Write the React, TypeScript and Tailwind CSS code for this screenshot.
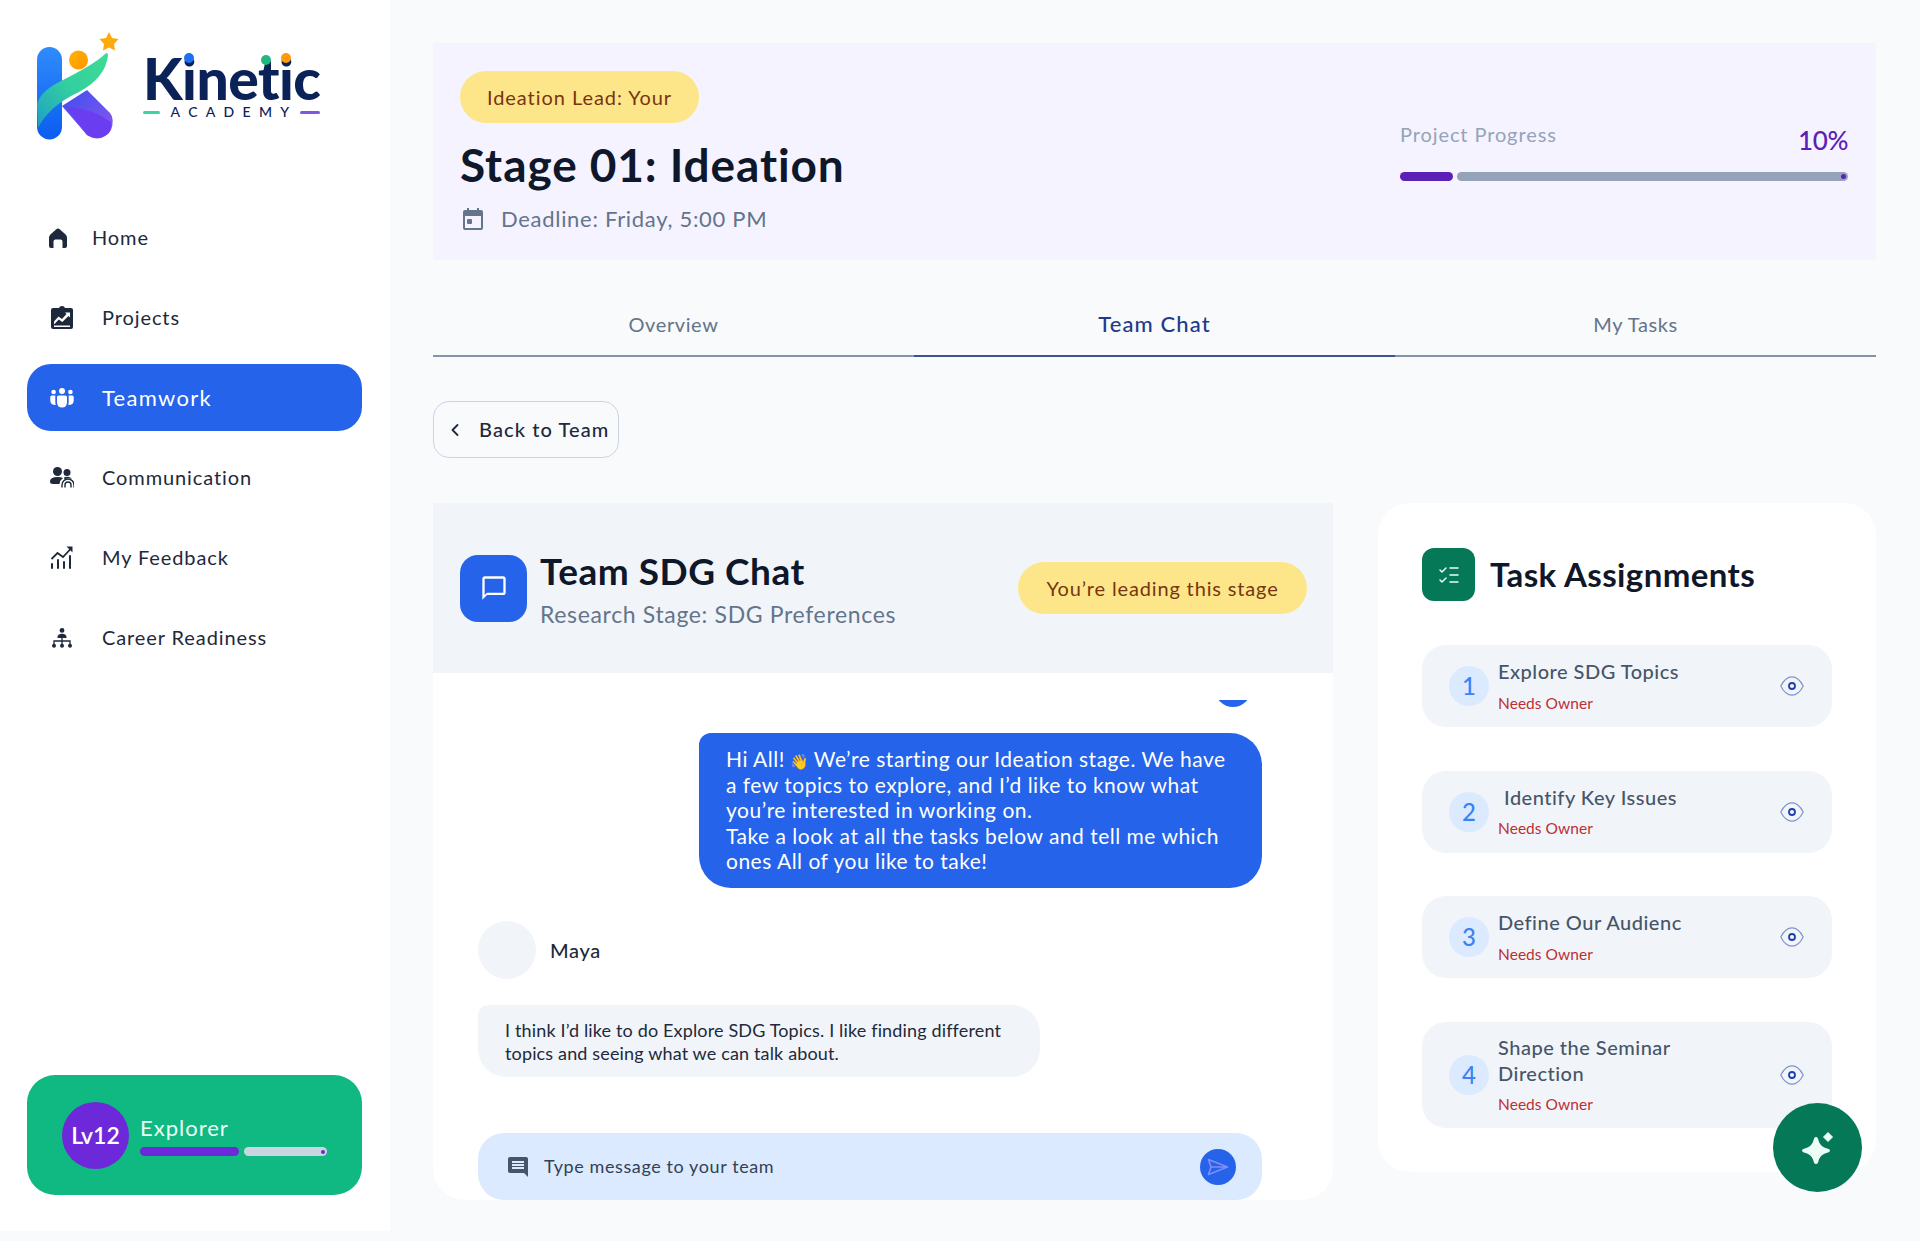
import { ChevronLeft, ListChecks } from "lucide-react";

type Task = {
  id: number;
  title: string[];
  indent?: boolean;
};

const tasks: Task[] = [
  { id: 1, title: ["Explore SDG Topics"] },
  { id: 2, title: ["Identify Key Issues"], indent: true },
  { id: 3, title: ["Define Our Audienc"] },
  { id: 4, title: ["Shape the Seminar", "Direction"] },
];

function KMark() {
  return (
    <svg width="90" height="112" viewBox="0 0 90 112" fill="none">
      <defs>
        <linearGradient id="kbar" x1="0" y1="0" x2="0" y2="1">
          <stop offset="0" stopColor="#2f8cfb" />
          <stop offset="1" stopColor="#0b5cf0" />
        </linearGradient>
        <linearGradient id="kleg" x1="0" y1="0" x2="1" y2="1">
          <stop offset="0" stopColor="#3b50ef" />
          <stop offset="1" stopColor="#8d56ee" />
        </linearGradient>
        <linearGradient id="kswoosh" x1="0" y1="1" x2="1" y2="0">
          <stop offset="0" stopColor="#1f9ec8" />
          <stop offset="0.5" stopColor="#33cf9f" />
          <stop offset="1" stopColor="#3fdc94" />
        </linearGradient>
        <linearGradient id="khead" x1="0" y1="0" x2="1" y2="1">
          <stop offset="0" stopColor="#ffb300" />
          <stop offset="1" stopColor="#ff9500" />
        </linearGradient>
      </defs>
      <path d="M25 74 L50 58 L73 81 Q78 87 74 98 Q64 112 50 103 L25 74 Z" fill="url(#kleg)" />
      <path d="M28 74 Q56 77 74 90 Q75 96 72 101 Q62 110 50 103 Z" fill="#6b3df0" />
      <rect x="0" y="15" width="25" height="92.5" rx="12.5" fill="url(#kbar)" />
      <path d="M0 72 Q3 60 22 50 Q58 32 68 22 Q71 19 71 24 Q68 46 42 60 Q12 74 1 96 Z" fill="url(#kswoosh)" />
      <circle cx="41.5" cy="28" r="9.5" fill="url(#khead)" />
      <path d="M72 0 L75 6 L81.5 7 L77 12 L78 18.5 L72 15.5 L66 18.5 L67 12 L62.5 7 L69 6 Z" fill="#ffa90a" />
    </svg>
  );
}

function Logo() {
  return (
    <div className="flex pl-[37px] pt-[32px]">
      <KMark />
      <div className="relative ml-[16px] mt-[21px] h-[74px] w-[177px]">
        <div className="text-[57px] leading-[50px] font-black tracking-[-0.5px] text-[#0a2257]">Kinetic</div>
        <span className="absolute left-[41px] top-[0px] h-[10px] w-[10px] rounded-full bg-[#1f6ff2]" />
        <span className="absolute left-[118px] top-[2px] h-[10px] w-[10px] rounded-full bg-[#22b77f]" />
        <span className="absolute left-[138px] top-[0px] h-[10px] w-[10px] rounded-full bg-[#ff9a0d]" />
        <div className="flex items-center justify-between">
          <span className="h-[3px] w-[17px] rounded-full bg-[#3fd49b]" />
          <span className="-mr-[8px] text-[14px] leading-[18px] font-medium tracking-[8.3px] text-[#0a2257]">ACADEMY</span>
          <span className="h-[3px] w-[20px] rounded-full bg-[#7b57e8]" />
        </div>
      </div>
    </div>
  );
}

function HomeIcon() {
  return (
    <svg width="18" height="20" viewBox="0 0 18 20" fill="currentColor">
      <path d="M9 0.5 Q10 0.5 11 1.5 L16.6 6.4 Q18 7.6 18 9.5 V18 Q18 20 16 20 H13.5 V13.5 Q13.5 11.5 11.5 11.5 H6.5 Q4.5 11.5 4.5 13.5 V20 H2 Q0 20 0 18 V9.5 Q0 7.6 1.4 6.4 L7 1.5 Q8 0.5 9 0.5 Z" />
    </svg>
  );
}

function ProjectsIcon() {
  return (
    <svg width="22" height="23" viewBox="0 0 22 23" fill="currentColor">
      <path fillRule="evenodd" d="M8 2 Q8.5 0 11 0 Q13.5 0 14 2 H20 Q22 2 22 4 V21 Q22 23 20 23 H2 Q0 23 0 21 V4 Q0 2 2 2 Z M3 15.5 L7.5 10.5 L11 13 L15.5 8 L14 6.5 H19 V11.5 L17.5 10 L11.3 16 L7.8 13.5 L3 18.5 Z M3 19.5 H19 V21 H3 Z" />
    </svg>
  );
}

function TeamIcon() {
  return (
    <svg width="24" height="20" viewBox="0 0 24 20" fill="currentColor">
      <circle cx="12" cy="3" r="3" />
      <circle cx="3.6" cy="4" r="2.3" />
      <circle cx="20.4" cy="4" r="2.3" />
      <path d="M7 9 Q7 7.5 8.5 7.5 H15.5 Q17 7.5 17 9 V14 Q17 19.5 12 19.5 Q7 19.5 7 14 Z" />
      <path d="M0.3 9 Q0.3 7.5 1.8 7.5 H5.4 Q5.3 8 5.3 9 V14 Q5.3 15.5 5.8 17 Q0.3 17 0.3 12.5 Z" />
      <path d="M23.7 9 Q23.7 7.5 22.2 7.5 H18.6 Q18.7 8 18.7 9 V14 Q18.7 15.5 18.2 17 Q23.7 17 23.7 12.5 Z" />
    </svg>
  );
}

function CommunicationIcon() {
  return (
    <svg width="24" height="21" viewBox="0 0 24 21" fill="currentColor">
      <circle cx="7.5" cy="4.5" r="4.5" />
      <circle cx="17" cy="5.5" r="3.5" />
      <path d="M0 14.5 Q0 10 7.5 10 Q11 10 13 11 Q10 13 9.5 17 H3 Q0 17 0 14.5 Z" />
      <path d="M14 10.5 Q16 9.5 19 10 Q21 10.5 22 12 Q18 10.5 14.5 12.5 Z" />
      <path d="M12 20.5 V18 A6 6 0 0 1 24 18 V20.5" fill="none" stroke="currentColor" strokeWidth="1.4" />
      <path d="M15 20.5 V18 A3 3 0 0 1 21 18 V20.5" fill="none" stroke="currentColor" strokeWidth="1.4" />
    </svg>
  );
}

function FeedbackIcon() {
  return (
    <svg width="22" height="23" viewBox="0 0 22 23" fill="currentColor">
      <rect x="0" y="17" width="2" height="6" rx="1" />
      <rect x="6" y="13" width="2" height="10" rx="1" />
      <rect x="12" y="15" width="2" height="8" rx="1" />
      <rect x="18" y="9" width="2" height="14" rx="1" />
      <path d="M0.5 13 L6.5 7 L12 11 L20 2.5" fill="none" stroke="currentColor" strokeWidth="1.8" />
      <path d="M15.5 0.5 H21.5 V6.5 Z" />
    </svg>
  );
}

function CareerIcon() {
  return (
    <svg width="20" height="20" viewBox="0 0 20 20" fill="currentColor">
      <circle cx="10" cy="2.4" r="2.4" />
      <path d="M5.5 9.5 Q5.5 5.8 10 5.8 Q14.5 5.8 14.5 9.5 V10 H5.5 Z" />
      <path d="M2 17 V13 H18 V17" fill="none" stroke="currentColor" strokeWidth="1.3" />
      <path d="M10 10 V17" fill="none" stroke="currentColor" strokeWidth="1.3" />
      <circle cx="2" cy="17.7" r="2" />
      <circle cx="10" cy="17.7" r="2" />
      <circle cx="18" cy="17.7" r="2" />
    </svg>
  );
}

function SparkleIcon() {
  return (
    <svg width="32" height="34" viewBox="0 0 32 34" fill="#ecfdf5">
      <path d="M14 6 C15.6 6 16 7.4 16.5 9.2 C17.6 13.4 20 15.8 24.6 17.2 C26.6 17.8 28 18.4 28 19.6 C28 20.8 26.6 21.4 24.6 22 C20 23.4 17.6 25.8 16.5 30 C16 31.8 15.6 33 14 33 C12.4 33 12 31.8 11.5 30 C10.4 25.8 8 23.4 3.4 22 C1.4 21.4 0 20.8 0 19.6 C0 18.4 1.4 17.8 3.4 17.2 C8 15.8 10.4 13.4 11.5 9.2 C12 7.4 12.4 6 14 6 Z" />
      <path d="M26 1.5 L30.5 6 L26 10.5 L21.5 6 Z" strokeLinejoin="round" stroke="#ecfdf5" strokeWidth="1" />
    </svg>
  );
}

function SendIcon() {
  return (
    <svg width="22" height="18" viewBox="0 0 22 18" fill="none">
      <path d="M1.5 1.5 L20.5 9 L1.5 16.5 L4 9 Z M4 9 H20.5" stroke="#818cf8" strokeWidth="1.7" strokeLinejoin="round" />
    </svg>
  );
}

function EyeIcon() {
  return (
    <svg width="24" height="20" viewBox="0 0 24 20" fill="none" className="shrink-0">
      <path d="M0.8 10 C4 3.5 8.5 0.8 12 0.8 C15.5 0.8 20 3.5 23.2 10 C20 16.5 15.5 19.2 12 19.2 C8.5 19.2 4 16.5 0.8 10 Z" stroke="#7f93cb" strokeWidth="1.2" />
      <circle cx="12" cy="10" r="3" stroke="#1e40af" strokeWidth="1.8" />
    </svg>
  );
}

type NavItemProps = {
  icon: React.ReactNode;
  label: string;
  active?: boolean;
  home?: boolean;
};

function NavItem({ icon, label, active, home }: NavItemProps) {
  return (
    <div
      className={`flex h-[67px] items-center rounded-[24px] pl-[23px] ${
        active ? "bg-[#2563eb] text-[22px] tracking-[1.3px] text-white" : "text-[20px] tracking-[0.9px] text-[#1e293b]"
      }`}
    >
      <span className={`flex w-[24px] justify-center ${home ? "-ml-[4px]" : ""}`}>{icon}</span>
      <span className={`${active ? "" : "pb-[2px]"} ${home ? "ml-[22px]" : "ml-[28px]"}`}>{label}</span>
    </div>
  );
}

function Sidebar() {
  return (
    <aside className="flex h-[1231px] w-[390px] shrink-0 flex-col bg-white">
      <div className="h-[204px]">
        <Logo />
      </div>
      <nav className="flex flex-col gap-[13px] pl-[27px] pr-[28px]">
        <NavItem icon={<HomeIcon />} label="Home" home />
        <NavItem icon={<ProjectsIcon />} label="Projects" />
        <NavItem icon={<TeamIcon />} label="Teamwork" active />
        <NavItem icon={<CommunicationIcon />} label="Communication" />
        <NavItem icon={<FeedbackIcon />} label="My Feedback" />
        <NavItem icon={<CareerIcon />} label="Career Readiness" />
      </nav>
      <div className="mt-auto pl-[27px] pr-[28px] pb-[36px]">
        <div className="flex h-[120px] items-center rounded-[28px] bg-[#10b981] px-[35px]">
          <div className="flex h-[67px] w-[67px] shrink-0 items-center justify-center rounded-full bg-[#6d28d9] pt-[1px] text-[23px] font-semibold text-white">
            Lv12
          </div>
          <div className="ml-[11px] flex-1">
            <div className="text-[22px] leading-[28px] tracking-[1px] text-[#ecfdf5]">Explorer</div>
            <div className="mt-[5px] flex gap-[5px]">
              <div className="h-[9px] w-[99px] rounded-full bg-[#6d28d9]" />
              <div className="flex h-[9px] w-[83px] items-center justify-end rounded-full bg-[#cbd5e1] pr-[2px]">
                <span className="h-[4px] w-[4px] rounded-full bg-[#6d28d9]" />
              </div>
            </div>
          </div>
        </div>
      </div>
    </aside>
  );
}

function StageHeader() {
  return (
    <section className="flex h-[217px] justify-between bg-[#f5f3ff] pl-[27px] pr-[28px] pt-[28px]">
      <div>
        <div className="inline-flex h-[52px] w-[239px] items-center justify-center rounded-full bg-[#fde68a] text-[20px] tracking-[0.95px] text-[#78350f]">
          Ideation Lead: Your
        </div>
        <h1 className="mt-[14px] text-[46px] leading-[56px] font-bold tracking-[0.9px] text-[#0f172a]">Stage 01: Ideation</h1>
        <div className="mt-[11px] flex items-center text-[22px] leading-[30px] tracking-[0.7px] text-[#64748b]">
          <svg width="20" height="22" viewBox="0 0 20 22" fill="currentColor" className="ml-[3px]">
            <path fillRule="evenodd" d="M4 0 H6 V2 H14 V0 H16 V2 H18 Q20 2 20 4 V20 Q20 22 18 22 H2 Q0 22 0 20 V4 Q0 2 2 2 H4 Z M2 8 V20 H18 V8 Z" />
            <rect x="4" y="11" width="5" height="5" rx="1" />
          </svg>
          <span className="ml-[18px]">Deadline: Friday, 5:00 PM</span>
        </div>
      </div>
      <div className="w-[448px] pt-[49px]">
        <div className="flex items-end justify-between">
          <span className="mb-[10px] text-[20px] leading-[28px] tracking-[0.9px] text-[#94a3b8]">Project Progress</span>
          <span className="mb-[2px] text-[26px] leading-[32px] font-medium tracking-[-0.4px] text-[#5b21b6]">10%</span>
        </div>
        <div className="mt-[14px] flex gap-[4px]">
          <div className="h-[9px] w-[53px] rounded-full bg-[#5b21b6]" />
          <div className="flex h-[9px] flex-1 items-center justify-end rounded-full bg-[#94a3b8] pr-[2px]">
            <span className="h-[5px] w-[5px] rounded-full bg-[#5b21b6]" />
          </div>
        </div>
      </div>
    </section>
  );
}

function Tabs() {
  return (
    <div className="grid h-[97px] grid-cols-3 text-[20px] tracking-[0.6px]">
      <div className="flex items-center justify-center border-b-2 border-[#8593aa] pt-[32px] text-[#64748b]">Overview</div>
      <div className="flex items-center justify-center border-b-2 border-[#3a5590] pt-[32px] text-[22px] font-medium tracking-[1.1px] text-[#1e3a8a]">Team Chat</div>
      <div className="flex items-center justify-center border-b-2 border-[#8593aa] pt-[32px] text-[#64748b]">My Tasks</div>
    </div>
  );
}

function ChatPanel() {
  return (
    <section className="flex h-[697px] w-[900px] shrink-0 flex-col overflow-hidden rounded-b-[32px] bg-white">
      <div className="flex h-[170px] shrink-0 items-center justify-between bg-[#f1f5f9] pl-[27px] pr-[26px]">
        <div className="flex items-center">
          <div className="flex h-[67px] w-[67px] items-center justify-center rounded-[18px] bg-[#2563eb] text-white">
            <svg width="28" height="28" viewBox="0 0 24 24" fill="currentColor">
              <path d="M20 2H4c-1.1 0-2 .9-2 2v18l4-4h14c1.1 0 2-.9 2-2V4c0-1.1-.9-2-2-2zm0 14H6l-2 2V4h16v12z" />
            </svg>
          </div>
          <div className="ml-[13px] pt-[3px]">
            <h2 className="text-[37px] leading-[46px] font-bold tracking-[0.5px] text-[#0f172a]">Team SDG Chat</h2>
            <p className="mt-[2px] text-[23px] leading-[36px] tracking-[0.65px] text-[#64748b]">Research Stage: SDG Preferences</p>
          </div>
        </div>
        <div className="flex h-[52px] w-[289px] items-center justify-center rounded-full bg-[#fde68a] text-[20px] tracking-[0.85px] text-[#78350f]">
          You’re leading this stage
        </div>
      </div>
      <div className="flex flex-1 flex-col pl-[45px] pr-[71px] pt-[27px]">
        <div className="ml-auto mr-[11px] h-[7px] w-[36px] overflow-hidden">
          <div className="-mt-[29px] h-[36px] w-[36px] rounded-full bg-[#2563eb]" />
        </div>
        <div className="mt-[26px] ml-auto h-[155px] w-[563px] whitespace-nowrap rounded-[32px] rounded-tl-[12px] bg-[#2563eb] pl-[27px] pt-[13px] text-[21px] leading-[25.6px] tracking-[0.5px] text-white">
          Hi All!<span className="mx-[5px] text-[15px] leading-none tracking-normal">👋</span>We’re starting our Ideation stage. We have
          <br />
          a few topics to explore, and I’d like to know what
          <br />
          you’re interested in working on.
          <br />
          Take a look at all the tasks below and tell me which
          <br />
          ones All of you like to take!
        </div>
        <div className="mt-[33px] flex items-center">
          <div className="h-[58px] w-[58px] rounded-full bg-[#f1f5f9]" />
          <span className="ml-[14px] text-[20px] font-medium tracking-[0.7px] text-[#1e293b]">Maya</span>
        </div>
        <div className="mt-[26px] h-[72px] w-[562px] rounded-[28px] rounded-tl-[10px] bg-[#f1f5f9] pl-[27px] pr-[20px] pt-[14px] text-[18px] leading-[22.5px] tracking-[0.15px] text-[#1e293b]">
          I think I’d like to do Explore SDG Topics. I like finding different topics and seeing what we can talk about.
        </div>
        <div className="mt-[56px] flex h-[67px] items-center rounded-[26px] bg-[#dbeafe] pl-[28px] pr-[26px]">
          <svg width="24" height="24" viewBox="0 0 24 24" fill="#475569">
            <path d="M20 2H4c-1.1 0-2 .9-2 2v12c0 1.1.9 2 2 2h14l4 4V4c0-1.1-.9-2-2-2zm-2 12H6v-2h12v2zm0-3H6V9h12v2zm0-3H6V6h12v2z" />
          </svg>
          <span className="ml-[14px] text-[18px] tracking-[0.6px] text-[#334155]">Type message to your team</span>
          <div className="ml-auto flex h-[36px] w-[36px] items-center justify-center rounded-full bg-[#2563eb]">
            <SendIcon />
          </div>
        </div>
      </div>
    </section>
  );
}

function TaskRow({ task }: { task: Task }) {
  return (
    <div className={`flex items-center rounded-[24px] bg-[#f1f5f9] pl-[27px] pr-[28px] ${task.title.length > 1 ? "h-[106px]" : "h-[82px]"}`}>
      <div className="flex h-[40px] w-[40px] shrink-0 items-center justify-center rounded-full bg-[#dbeafe] text-[24px] font-medium text-[#3b82f6]">
        {task.id}
      </div>
      <div className="ml-[9px] flex-1">
        {task.title.map((line) => (
          <div key={line} className={`text-[20px] leading-[25.5px] font-medium tracking-[0.5px] text-[#475569] ${task.indent ? "pl-[6px]" : ""}`}>
            {line}
          </div>
        ))}
        <div className="mt-[8px] text-[15.5px] leading-[20px] tracking-[0.05px] text-[#bd2f35]">Needs Owner</div>
      </div>
      <EyeIcon />
    </div>
  );
}

function TaskPanel() {
  return (
    <section className="h-[669px] w-[498px] shrink-0 rounded-[32px] bg-white px-[44px] pt-[45px]">
      <div className="flex items-center">
        <div className="flex h-[53px] w-[53px] items-center justify-center rounded-[12px] bg-[#047857] text-[#ecfdf5]">
          <ListChecks className="h-[24px] w-[24px]" strokeWidth={1.5} />
        </div>
        <h2 className="ml-[15px] text-[33px] font-bold tracking-[0.4px] text-[#0f172a]">Task Assignments</h2>
      </div>
      <div className="mt-[44px] flex flex-col gap-[43.5px]">
        {tasks.map((task) => (
          <TaskRow key={task.id} task={task} />
        ))}
      </div>
    </section>
  );
}

export default function App() {
  return (
    <div
      className="relative flex h-[1241px] overflow-hidden bg-[#f8fafc]"
      style={{ fontFamily: '"Lato", "Noto Sans", sans-serif' }}
    >
      <Sidebar />
      <main className="flex-1 pl-[43px] pr-[44px] pt-[43px]">
        <StageHeader />
        <Tabs />
        <button className="mt-[44px] flex h-[57px] w-[186px] items-center rounded-[16px] border border-[#cbd5e1] pl-[11px] text-[20px] font-medium tracking-[1.1px] text-[#1e293b]">
          <ChevronLeft className="h-[20px] w-[20px]" strokeWidth={2.2} />
          <span className="ml-[14px] pb-[2px]">Back to Team</span>
        </button>
        <div className="mt-[45px] flex items-start gap-[45px]">
          <ChatPanel />
          <TaskPanel />
        </div>
      </main>
      <button className="absolute left-[1773px] top-[1103px] flex h-[89px] w-[89px] items-center justify-center rounded-full bg-[#047857]">
        <SparkleIcon />
      </button>
    </div>
  );
}
